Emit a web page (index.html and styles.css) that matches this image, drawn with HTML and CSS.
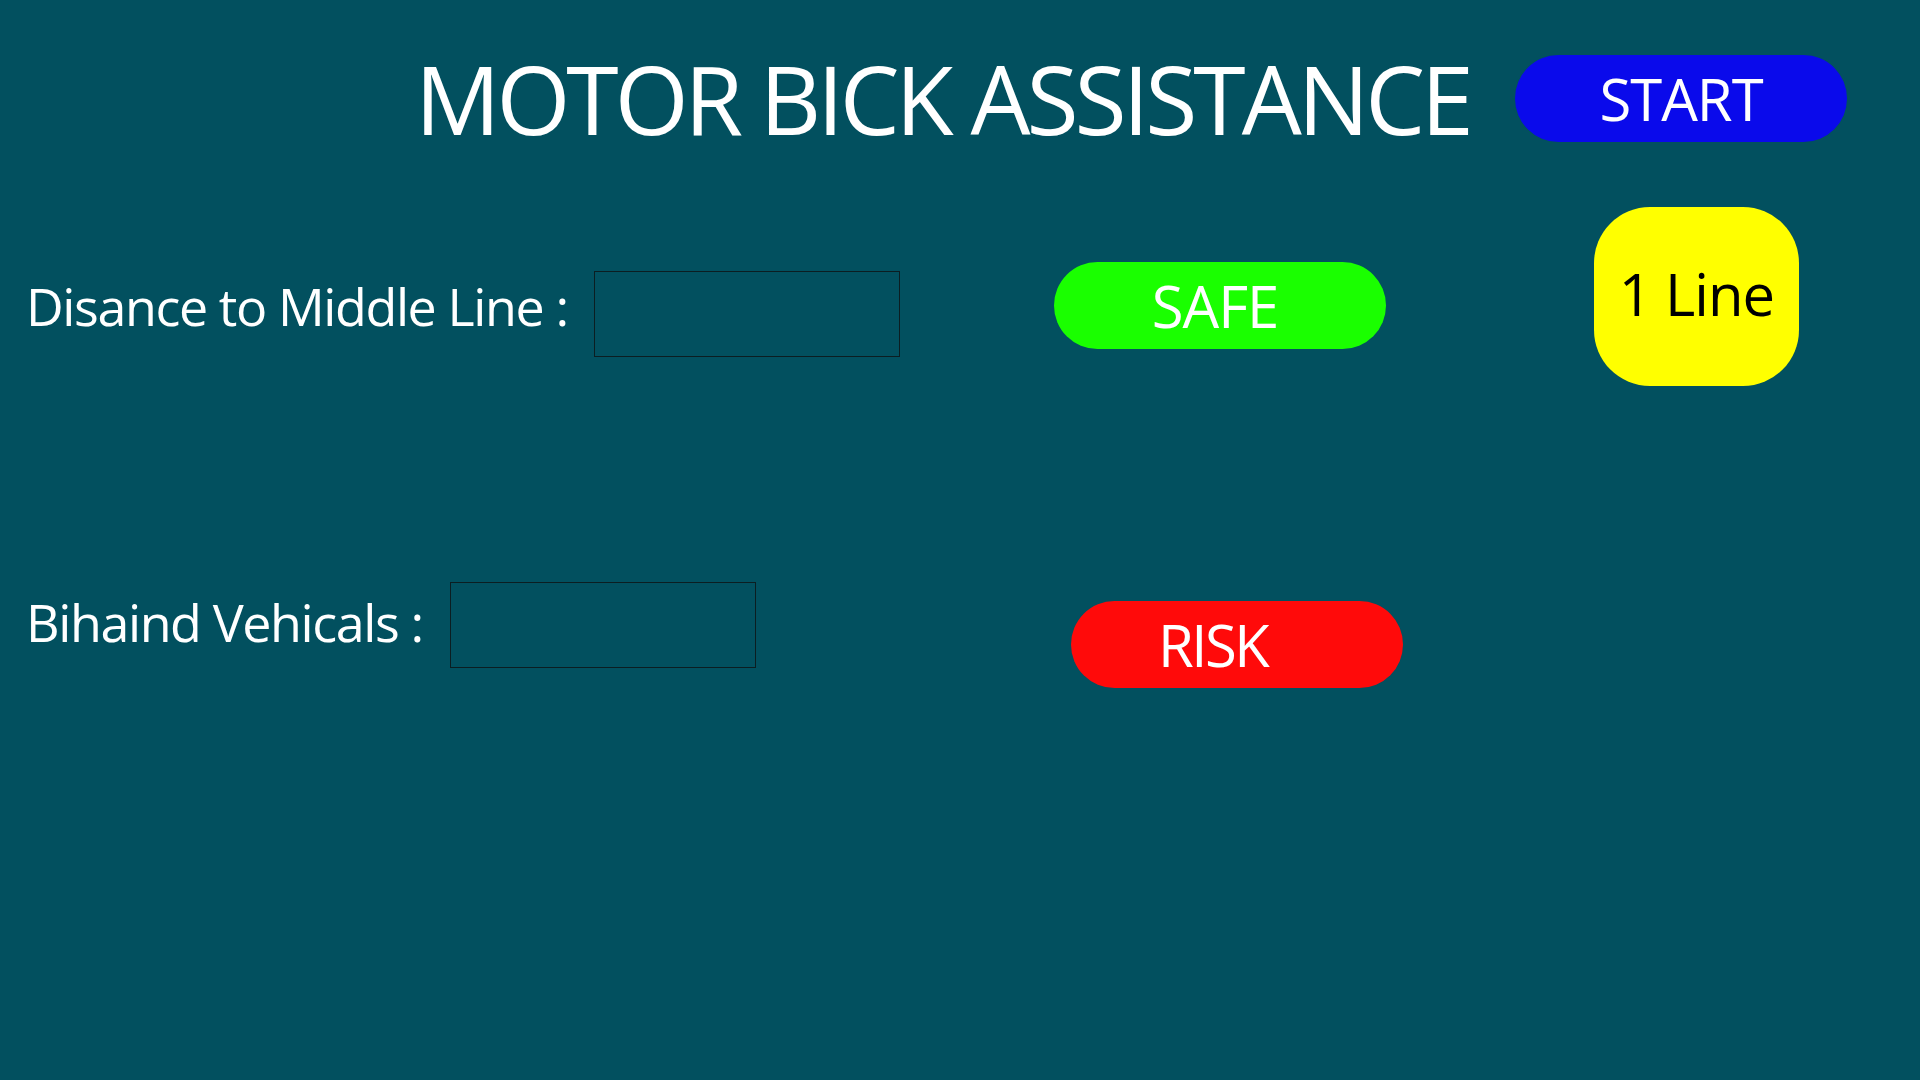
FILE: index.html
```html
<!DOCTYPE html>
<html>
<head>
<meta charset="utf-8">
<title>Motor Bick Assistance</title>
<link rel="stylesheet" href="styles.css">
</head>
<body>
<div class="screen">
  <header class="header">
    <h1 class="title">MOTOR BICK ASSISTANCE</h1>
    <button class="pill pill-start">START</button>
  </header>
  <section class="row row-one">
    <div class="field field-distance">
      <span class="label">Disance to Middle Line :</span>
      <div class="box"></div>
    </div>
    <div class="pill pill-safe">SAFE</div>
    <div class="lane">1 Line</div>
  </section>
  <section class="row row-two">
    <div class="field field-behind">
      <span class="label">Bihaind Vehicals :</span>
      <div class="box"></div>
    </div>
    <div class="pill pill-risk"><span class="risk-text">RISK</span></div>
  </section>
</div>
</body>
</html>
```
FILE: styles.css
```css
html, body {
  margin: 0;
  padding: 0;
}
body {
  background: #02505f;
  width: 1920px;
  height: 1080px;
  overflow: hidden;
  font-family: "Open Sans", "Noto Sans", sans-serif;
  color: #ffffff;
}
.screen {
  display: flex;
  flex-direction: column;
}
.header {
  display: flex;
  align-items: flex-start;
  padding-left: 415px;
  padding-top: 55px;
  height: 152px;
  box-sizing: border-box;
}
.title {
  margin: 0;
  font-weight: 400;
  font-size: 95px;
  line-height: 87px;
  letter-spacing: -4px;
  width: 1100px;
  white-space: nowrap;
  color: #ffffff;
}
.pill {
  display: flex;
  align-items: center;
  justify-content: center;
  width: 332px;
  height: 87px;
  border-radius: 44px;
  border: none;
  padding: 0;
  font-family: "Open Sans", "Noto Sans", sans-serif;
  font-size: 58px;
  color: #ffffff;
  letter-spacing: -1px;
  box-sizing: border-box;
}
.pill-start {
  background: #0a0aeb;
}
.row {
  display: flex;
  align-items: flex-start;
}
.row-one {
  margin-top: 55px;
  height: 179px;
}
.row-two {
  margin-top: 196px;
}
.field {
  display: flex;
  align-items: flex-start;
  padding-left: 26px;
}
.label {
  font-size: 52px;
  letter-spacing: -1.4px;
  white-space: nowrap;
  line-height: 86px;
}
.box {
  width: 306px;
  height: 86px;
  border: 1px solid #0b1e22;
  box-sizing: border-box;
}
.field-distance {
  margin-top: 64px;
  width: 874px;
  gap: 28px;
}
.field-distance .label {
  width: 540px;
  margin-top: -8px;
}
.pill-safe {
  margin-left: 154px;
  margin-top: 55px;
  background: #1aff00;
  padding-right: 10px;
}
.lane {
  margin-left: 208px;
  width: 205px;
  height: 179px;
  border-radius: 56px;
  background: #ffff00;
  color: #000000;
  display: flex;
  align-items: center;
  justify-content: center;
  font-size: 58px;
  letter-spacing: -1px;
  padding-bottom: 6px;
  box-sizing: border-box;
}
.field-behind {
  width: 730px;
  gap: 32px;
}
.field-behind .label {
  width: 392px;
  margin-top: -3px;
}
.pill-risk {
  margin-left: 315px;
  margin-top: 19px;
  background: #ff0a0a;
  justify-content: flex-start;
  padding-left: 87px;
  letter-spacing: -2.5px;
}
```
